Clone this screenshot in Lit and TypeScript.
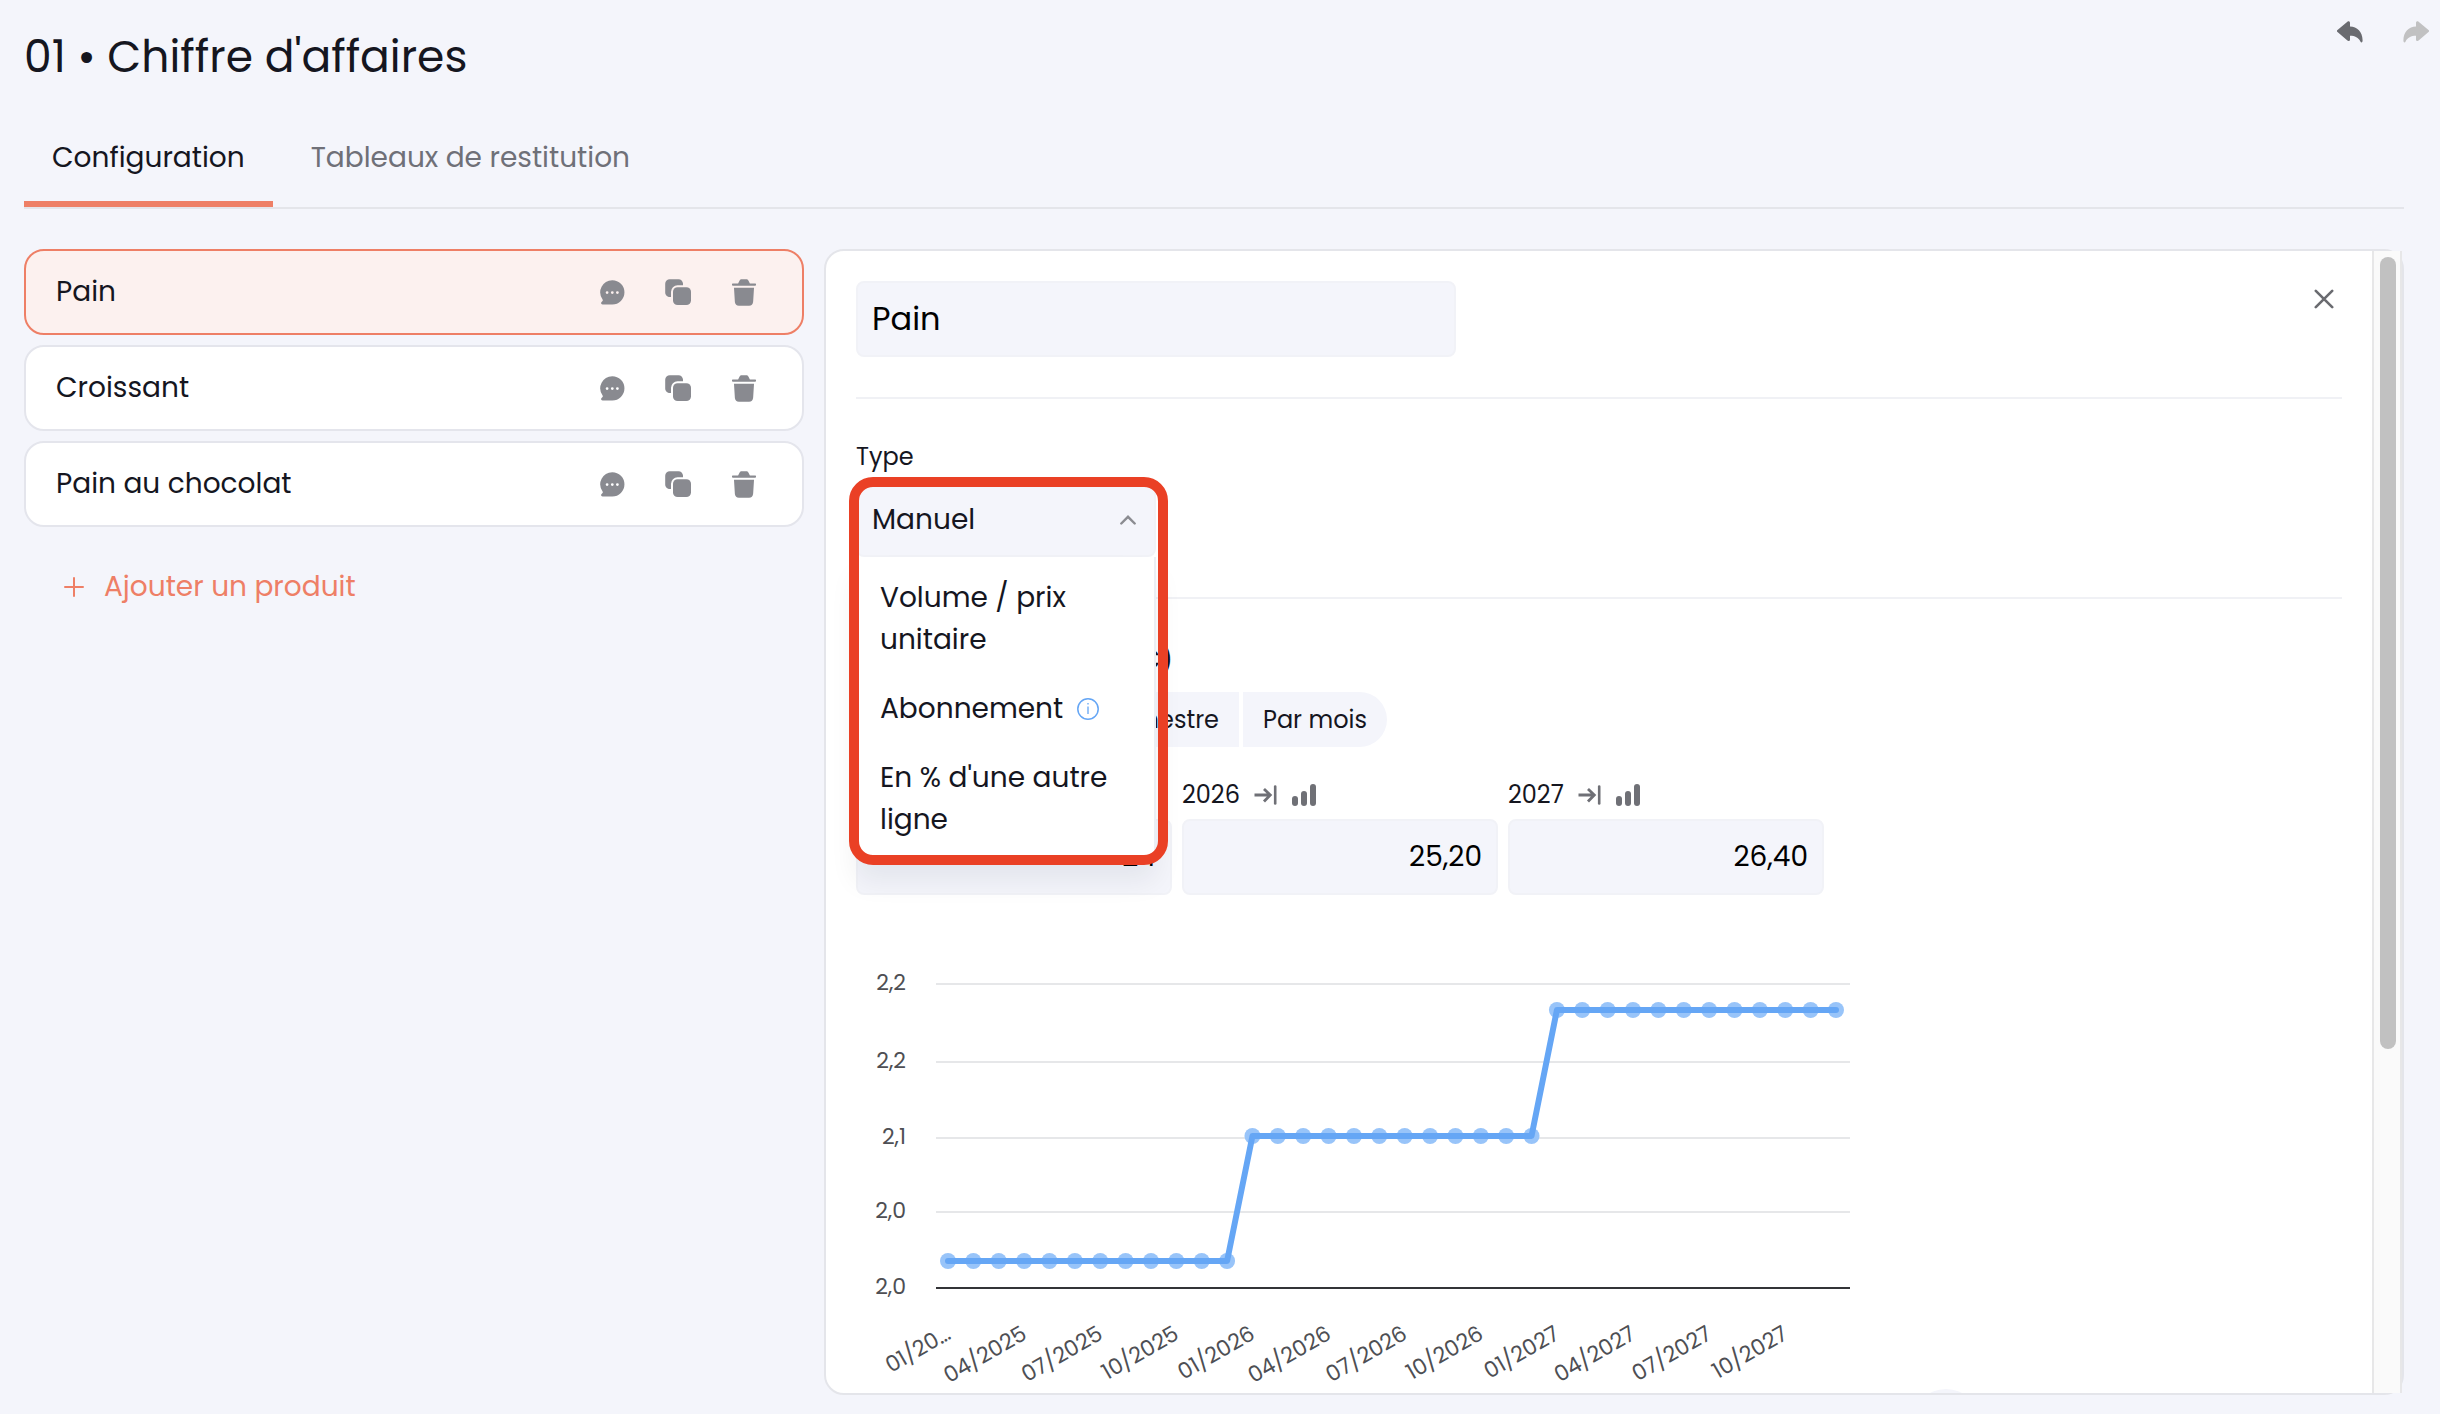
import { LitElement, html, svg, css } from "lit";
import { customElement, property } from "lit/decorators.js";
import { classMap } from "lit/directives/class-map.js";

const chatIcon = html`<svg class="icon" width="25" height="25" viewBox="0 0 25 25" aria-hidden="true">
  <path fill="currentColor" fill-rule="evenodd" d="M12.3.2a12.1 12.1 0 1 1 0 24.3H2.6c-1.5 0-2-1.6-1-2.6l.9-1c.4-.5.4-.9.1-1.5A12.1 12.1 0 0 1 12.3.2zM7.1 11.2a1.4 1.4 0 1 0 0 2.8a1.4 1.4 0 0 0 0-2.8zM12.3 11.2a1.4 1.4 0 1 0 0 2.8a1.4 1.4 0 0 0 0-2.8zM17.4 11.2a1.4 1.4 0 1 0 0 2.8a1.4 1.4 0 0 0 0-2.8z"/></svg>`;

const copyIcon = html`<svg class="icon" width="26" height="26" viewBox="0 0 26 26" aria-hidden="true">
  <rect x="8" y="8.2" width="18" height="17.8" rx="4.6" fill="currentColor"/>
  <path fill="currentColor" d="M4.8.2h8.7c2.5 0 4.4 1.9 4.5 4.4v1.6h-5.4A6.6 6.6 0 0 0 6 12.8v5.3H5C2.3 18.1.2 16.2.2 13.6V4.8A4.6 4.6 0 0 1 4.800.2z"/></svg>`;

const trashIcon = html`<svg class="icon" width="24" height="27" viewBox="0 0 24 27" aria-hidden="true">
  <path fill="currentColor" d="M1 4.4h5.1l1.4-2.7C8.1.6 8.8.2 9.8.2h4.4c1 0 1.7.4 2.3 1.5l1.4 2.7H23a1.15 1.15 0 0 1 0 2.3H1a1.15 1.15 0 0 1 0-2.3z"/>
  <path fill="currentColor" d="M2 8.8h20l-.9 14.2c-.2 2.4-1.7 3.7-4 3.7H6.9c-2.3 0-3.8-1.3-4-3.7z"/></svg>`;

const arrowPath = "M.5 9 10.4.7C11.5-.2 13 .4 13 1.8v3.6c7.2.3 12.5 5.3 12.6 13.8 0 2.3-1.4 2.9-2.2 1.3C21.5 16.5 18 14.9 13 14.8v3.6c0 1.4-1.5 2.1-2.6 1.2L.5 11a1.3 1.3 0 0 1 0-2z";

@customElement("product-row")
class ProductRow extends LitElement {
  @property() name = "";
  @property({ type: Boolean }) active = false;

  static styles = css`
    :host { display: block; }
    .row {
      display: flex; align-items: center; box-sizing: border-box;
      height: 86px; padding: 0 40px 0 30px;
      background: #fff; border: 2px solid #e4e5ec; border-radius: 20px;
      color: #15161f;
    }
    .active { background: #fcf1ef; border-color: #ee7f66; }
    .name { flex: 1; line-height: 42px; }
    .actions { display: flex; gap: 30px; }
    button {
      display: grid; place-items: center; width: 36px; height: 36px;
      padding: 0; border: 0; background: none; color: #898a90; cursor: pointer;
    }
    .icon { display: block; }
  `;

  render() {
    return html`<div class=${classMap({ row: true, active: this.active })}>
      <span class="name">${this.name}</span>
      <div class="actions">
        <button aria-label="Commenter">${chatIcon}</button>
        <button aria-label="Dupliquer">${copyIcon}</button>
        <button aria-label="Supprimer">${trashIcon}</button>
      </div>
    </div>`;
  }
}

@customElement("month-chart")
class MonthChart extends LitElement {
  static styles = css`
    :host { display: block; }
    svg { display: block; overflow: visible; }
    .grid { stroke: #e6e7e9; stroke-width: 2; }
    .base { stroke: #333437; stroke-width: 2; }
    .label, .tick { fill: #4e4f54; font-size: 22px; text-anchor: end; }
    .dot { fill: #98c4f9; }
    .line { fill: none; stroke: #65a6f5; stroke-width: 6; stroke-linecap: round; stroke-linejoin: round; }
  `;

  private levels = [326, 201, 75];
  private rows = [
    { y: 49, text: "2,2" },
    { y: 127, text: "2,2" },
    { y: 203, text: "2,1" },
    { y: 277, text: "2,0" },
    { y: 353, text: "2,0" },
  ];
  private ticks = ["01/20…", "04/2025", "07/2025", "10/2025", "01/2026", "04/2026",
    "07/2026", "10/2026", "01/2027", "04/2027", "07/2027", "10/2027"];

  private x(month: number) { return 92 + (month * 888) / 35; }

  render() {
    const points = Array.from({ length: 36 }, (_, i) => ({ x: this.x(i), y: this.levels[Math.floor(i / 12)] }));
    return html`<svg width="1000" height="454" viewBox="0 0 1000 454" role="img" aria-label="Évolution par mois">
      ${this.rows.map((r, i) => svg`
        <line class=${i === this.rows.length - 1 ? "base" : "grid"} x1="80" x2="994" y1=${r.y} y2=${r.y}></line>
        <text class="label" x="50" y=${r.y + 6}>${r.text}</text>`)}
      ${points.map((p) => svg`<circle class="dot" cx=${p.x} cy=${p.y} r="8"></circle>`)}
      <polyline class="line" points=${points.map((p) => `${p.x},${p.y}`).join(" ")}></polyline>
      ${this.ticks.map((t, i) => {
        const x = this.x(i * 3) + 4;
        return svg`<text class="tick" x=${x} y="403" transform=${`rotate(-30 ${x} 403)`}>${t}</text>`;
      })}
    </svg>`;
  }
}

@customElement("app-root")
class AppRoot extends LitElement {
  static styles = css`
    :host {
      display: flex; flex-direction: column; box-sizing: border-box;
      height: 100vh; padding-bottom: 19px;
      background: #f4f5fb; color: #15161f;
      font-family: Poppins, Inter, "Open Sans", sans-serif; font-size: 28px;
    }
    button, input, select { font: inherit; color: inherit; }
    button { padding: 0; border: 0; background: none; cursor: pointer; }
    svg { display: block; }

    .top { display: flex; justify-content: space-between; align-items: flex-start; padding: 0 11px 0 24px; }
    h1 { margin: 24px 0 0; font-size: 44px; line-height: 66px; font-weight: 400; }
    .history { display: flex; gap: 40px; padding-top: 21px; color: #6a6b70; }
    .history button:disabled { color: #c1c1c2; cursor: default; }
    .flip { transform: scaleX(-1); }

    .tabs { display: flex; gap: 10px; margin: 23px 36px 0 24px; border-bottom: 2px solid #e4e5ea; }
    .tab { height: 94px; padding: 2px 28px 0; border-bottom: 6px solid transparent; color: #6f7078; }
    .tab.current { color: #15161f; border-color: #ee7f66; }

    .main { flex: 1; min-height: 0; display: flex; gap: 20px; padding: 40px 36px 0 24px; }
    .products { flex: none; width: 780px; display: flex; flex-direction: column; gap: 10px; }
    .add {
      display: flex; align-items: center; gap: 20px; align-self: flex-start;
      margin: 29px 0 0 40px; line-height: 42px; color: #ee7f66;
    }

    .panel { flex: 1; min-width: 0; display: flex; background: #fff; border: 2px solid #e4e5ea; border-radius: 20px; }
    .content { flex: 1; min-width: 0; overflow: hidden; padding: 30px 30px 0; }
    .track { flex: none; width: 26px; background: #fafafa; border: solid #e7e7e8; border-width: 0 2px; }
    .thumb { height: calc(69% + 4px); margin: 6px 4px 0 6px; border-radius: 8px; background: #c1c1c1; }

    .head { display: flex; justify-content: space-between; align-items: flex-start; }
    .close { display: grid; place-items: center; width: 36px; height: 36px; color: #6a6b70; }
    .field {
      display: block; box-sizing: border-box; width: 100%; height: 76px; padding: 0 14px; margin: 0;
      background: #f4f5fb; border: 2px solid #f1f2f7; border-radius: 8px; outline: 0; color: #000;
    }
    .name { width: 600px; font-size: 32px; }
    .amount { text-align: right; }
    .rule { height: 2px; margin: 40px 0; background: #f0f1f5; }
    .small { display: block; font-size: 24px; line-height: 36px; margin-bottom: 6px; }

    .picker { position: relative; width: 300px; }
    .picker select { appearance: none; color: #15161f; }
    .chevron { position: absolute; right: 20px; top: 34px; color: #8b8c91; pointer-events: none; }
    .menu {
      position: absolute; z-index: 1; top: 100%; left: 0; right: 0; box-sizing: border-box;
      display: flex; flex-direction: column; gap: 27px; margin: 0; padding: 20px 22px 18px; list-style: none;
      background: #fff; border: solid #eceef4; border-width: 0 2px 2px; border-radius: 0 0 8px 8px;
      box-shadow: 0 20px 28px rgba(20, 22, 40, 0.07);
      line-height: 42px;
    }
    .option { display: flex; align-items: center; gap: 14px; }
    .highlight {
      position: absolute; z-index: 2; left: -7px; right: -12px; top: -4px; height: 368px;
      border: 10px solid #ea4025; border-radius: 24px; pointer-events: none;
    }

    h2 { width: 317px; margin: 0 0 11px; font-size: 28px; line-height: 42px; font-weight: 600; text-align: right; white-space: nowrap; }
    .segments { display: flex; gap: 4px; width: 531px; margin-bottom: 30px; border-radius: 28px; overflow: hidden; }
    .segment { height: 55px; padding: 0 20px; background: #f4f5fb; font-size: 24px; white-space: nowrap; }
    .segment:first-child { flex: 1; }
    .years { display: grid; grid-template-columns: repeat(3, 316px); gap: 10px; margin-bottom: 40px; }
    .year { display: flex; align-items: center; gap: 14px; }
    .year button { color: #6f7076; }
    .foot { display: flex; justify-content: flex-end; width: 1124px; }
    .round { width: 68px; height: 68px; border-radius: 50%; background: #f4f5fb; }
  `;

  private products = ["Pain", "Croissant", "Pain au chocolat"];
  private years = [
    { year: "2025", value: "24" },
    { year: "2026", value: "25,20" },
    { year: "2027", value: "26,40" },
  ];

  render() {
    return html`
      <header class="top">
        <h1>01 • Chiffre d'affaires</h1>
        <div class="history">
          <button aria-label="Annuler"><svg width="26" height="22" viewBox="0 0 26 22"><path fill="currentColor" d=${arrowPath}/></svg></button>
          <button aria-label="Rétablir" disabled><svg class="flip" width="26" height="22" viewBox="0 0 26 22"><path fill="currentColor" d=${arrowPath}/></svg></button>
        </div>
      </header>
      <nav class="tabs">
        <button class="tab current">Configuration</button>
        <button class="tab">Tableaux de restitution</button>
      </nav>
      <main class="main">
        <section class="products">
          ${this.products.map((p, i) => html`<product-row .name=${p} ?active=${i === 0}></product-row>`)}
          <button class="add">
            <svg width="20" height="20" viewBox="0 0 20 20" aria-hidden="true"><path d="M10 1v18M1 10h18" stroke="currentColor" stroke-width="2" stroke-linecap="round"/></svg>
            Ajouter un produit
          </button>
        </section>
        <section class="panel">
          <div class="content">
            <div class="head">
              <input class="field name" aria-label="Nom du produit" .value=${"Pain"}>
              <button class="close" aria-label="Fermer"><svg width="20" height="20" viewBox="0 0 20 20"><path d="M1.8 1.8l16.4 16.4M18.2 1.8L1.8 18.2" stroke="currentColor" stroke-width="2.6" stroke-linecap="round"/></svg></button>
            </div>
            <div class="rule"></div>
            <label class="small" for="type">Type</label>
            <div class="picker">
              <select class="field" id="type"><option>Manuel</option></select>
              <svg class="chevron" width="16" height="10" viewBox="0 0 16 10" aria-hidden="true"><path d="M1.3 8.5L8 1.8l6.7 6.7" fill="none" stroke="currentColor" stroke-width="2.4" stroke-linecap="round"/></svg>
              <ul class="menu">
                <li class="option">Volume / prix unitaire</li>
                <li class="option">Abonnement
                  <svg width="22" height="22" viewBox="0 0 22 22" aria-hidden="true" fill="none" stroke="#65a6f5"><circle cx="11" cy="11" r="10.2" stroke-width="1.5"/><path d="M11 8.500V16M11 5v1.5" stroke-width="1.3"/></svg>
                </li>
                <li class="option">En % d'une autre ligne</li>
              </ul>
              <div class="highlight"></div>
            </div>
            <div class="rule"></div>
            <h2>CA (€)</h2>
            <div class="segments">
              <button class="segment">Par année</button>
              <button class="segment">Par trimestre</button>
              <button class="segment">Par mois</button>
            </div>
            <div class="years">
              ${this.years.map((y) => html`<div>
                <div class="small year">
                  <label for=${"y" + y.year}>${y.year}</label>
                  <button aria-label="Étendre"><svg width="24" height="20" viewBox="0 0 24 20" fill="none" stroke="currentColor"><path d="M.5 10H16M10 4l6.3 6-6.3 6.5" stroke-width="2.8"/><path d="M21.2 1.5v17" stroke-width="2.6" stroke-linecap="round"/></svg></button>
                  <button aria-label="Répartir"><svg width="24" height="22" viewBox="0 0 24 22" fill="currentColor"><rect y="12" width="6" height="10" rx="3"/><rect x="9" y="7" width="6" height="15" rx="3"/><rect x="18" width="6" height="22" rx="3"/></svg></button>
                </div>
                <input class="field amount" id=${"y" + y.year} .value=${y.value}>
              </div>`)}
            </div>
            <month-chart></month-chart>
            <div class="foot"><button class="round" aria-label="Aide"></button></div>
          </div>
          <div class="track"><div class="thumb"></div></div>
        </section>
      </main>`;
  }
}
